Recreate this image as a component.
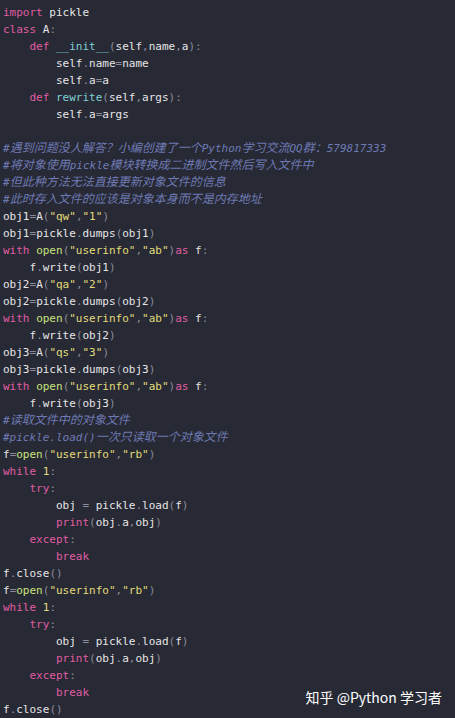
import React from "react"

type Seg = [string, string]

const tone: Record<string, string> = {
  t: "text-[#e6e6e6]",
  k: "text-[#e05da2]",
  f: "text-[#7fd0d4]",
  o: "text-[#c9e27c]",
  s: "text-[#e2dc7a]",
  n: "text-[#e2dc7a]",
  p: "text-[#8a8c9a]",
  c: "text-[#6e7ab3] italic",
}

const lines: Seg[][] = [
  [["k", "import"], ["t", " pickle"]],
  [["k", "class"], ["t", " A"], ["p", ":"]],
  [["t", "    "], ["k", "def"], ["t", " "], ["f", "__init__"], ["p", "("], ["t", "self"], ["p", ","], ["t", "name"], ["p", ","], ["t", "a"], ["p", "):"]],
  [["t", "        self"], ["p", "."], ["t", "name"], ["p", "="], ["t", "name"]],
  [["t", "        self"], ["p", "."], ["t", "a"], ["p", "="], ["t", "a"]],
  [["t", "    "], ["k", "def"], ["t", " "], ["f", "rewrite"], ["p", "("], ["t", "self"], ["p", ","], ["t", "args"], ["p", "):"]],
  [["t", "        self"], ["p", "."], ["t", "a"], ["p", "="], ["t", "args"]],
  [],
  [["c", "#遇到问题没人解答？小编创建了一个Python学习交流QQ群：579817333"]],
  [["c", "#将对象使用pickle模块转换成二进制文件然后写入文件中"]],
  [["c", "#但此种方法无法直接更新对象文件的信息"]],
  [["c", "#此时存入文件的应该是对象本身而不是内存地址"]],
  ...[1, 2, 3].flatMap((i): Seg[][] => [
    [["t", `obj${i}`], ["p", "="], ["t", "A"], ["p", "("], ["s", `"q${"wqas"[i === 1 ? 0 : i === 2 ? 2 : 3]}"`], ["p", ","], ["s", `"${i}"`], ["p", ")"]],
    [["t", `obj${i}`], ["p", "="], ["t", "pickle"], ["p", "."], ["t", "dumps"], ["p", "("], ["t", `obj${i}`], ["p", ")"]],
    [["k", "with"], ["t", " "], ["o", "open"], ["p", "("], ["s", '"userinfo"'], ["p", ","], ["s", '"ab"'], ["p", ")"], ["k", "as"], ["t", " f"], ["p", ":"]],
    [["t", "    f"], ["p", "."], ["t", "write"], ["p", "("], ["t", `obj${i}`], ["p", ")"]],
  ]),
  [["c", "#读取文件中的对象文件"]],
  [["c", "#pickle.load()一次只读取一个对象文件"]],
  ...[0, 1].flatMap((): Seg[][] => [
    [["t", "f"], ["p", "="], ["o", "open"], ["p", "("], ["s", '"userinfo"'], ["p", ","], ["s", '"rb"'], ["p", ")"]],
    [["k", "while"], ["t", " "], ["n", "1"], ["p", ":"]],
    [["t", "    "], ["k", "try"], ["p", ":"]],
    [["t", "        obj "], ["p", "="], ["t", " pickle"], ["p", "."], ["t", "load"], ["p", "("], ["t", "f"], ["p", ")"]],
    [["t", "        "], ["k", "print"], ["p", "("], ["t", "obj"], ["p", "."], ["t", "a"], ["p", ","], ["t", "obj"], ["p", ")"]],
    [["t", "    "], ["k", "except"], ["p", ":"]],
    [["t", "        "], ["k", "break"]],
    [["t", "f"], ["p", "."], ["t", "close"], ["p", "()"]],
  ]),
]

// CJK glyphs in the shot run a little wider than the mono fallback
function Comment({ text }: { text: string }) {
  const parts = text.split(/([\u3000-\u9fff\uff00-\uffef]+)/)
  return (
    <span className={tone.c}>
      {parts.map((p, i) =>
        i % 2 ? (
          <span key={i} className="text-[12px]">{p}</span>
        ) : (
          <span key={i}>{p}</span>
        )
      )}
    </span>
  )
}

export default function App() {
  return (
    <div className="relative w-[455px] h-[718px] overflow-hidden bg-[#272935]">
      <pre className="pt-[4px] pl-[3px] font-['DejaVu_Sans_Mono','Noto_Sans_CJK_SC',monospace] text-[11px]">
        {lines.map((line, i) => (
          <div key={i} className="h-[17px] leading-[17px] whitespace-pre">
            {line.map(([k, txt], j) =>
              k === "c" ? (
                <Comment key={j} text={txt} />
              ) : (
                <span key={j} className={tone[k]}>{txt}</span>
              )
            )}
          </div>
        ))}
      </pre>
      <div className="absolute right-[13px] bottom-[12px] text-[14px] leading-[18px] text-white font-['Noto_Sans_CJK_SC',sans-serif]">
        知乎 @Python 学习者
      </div>
    </div>
  )
}
